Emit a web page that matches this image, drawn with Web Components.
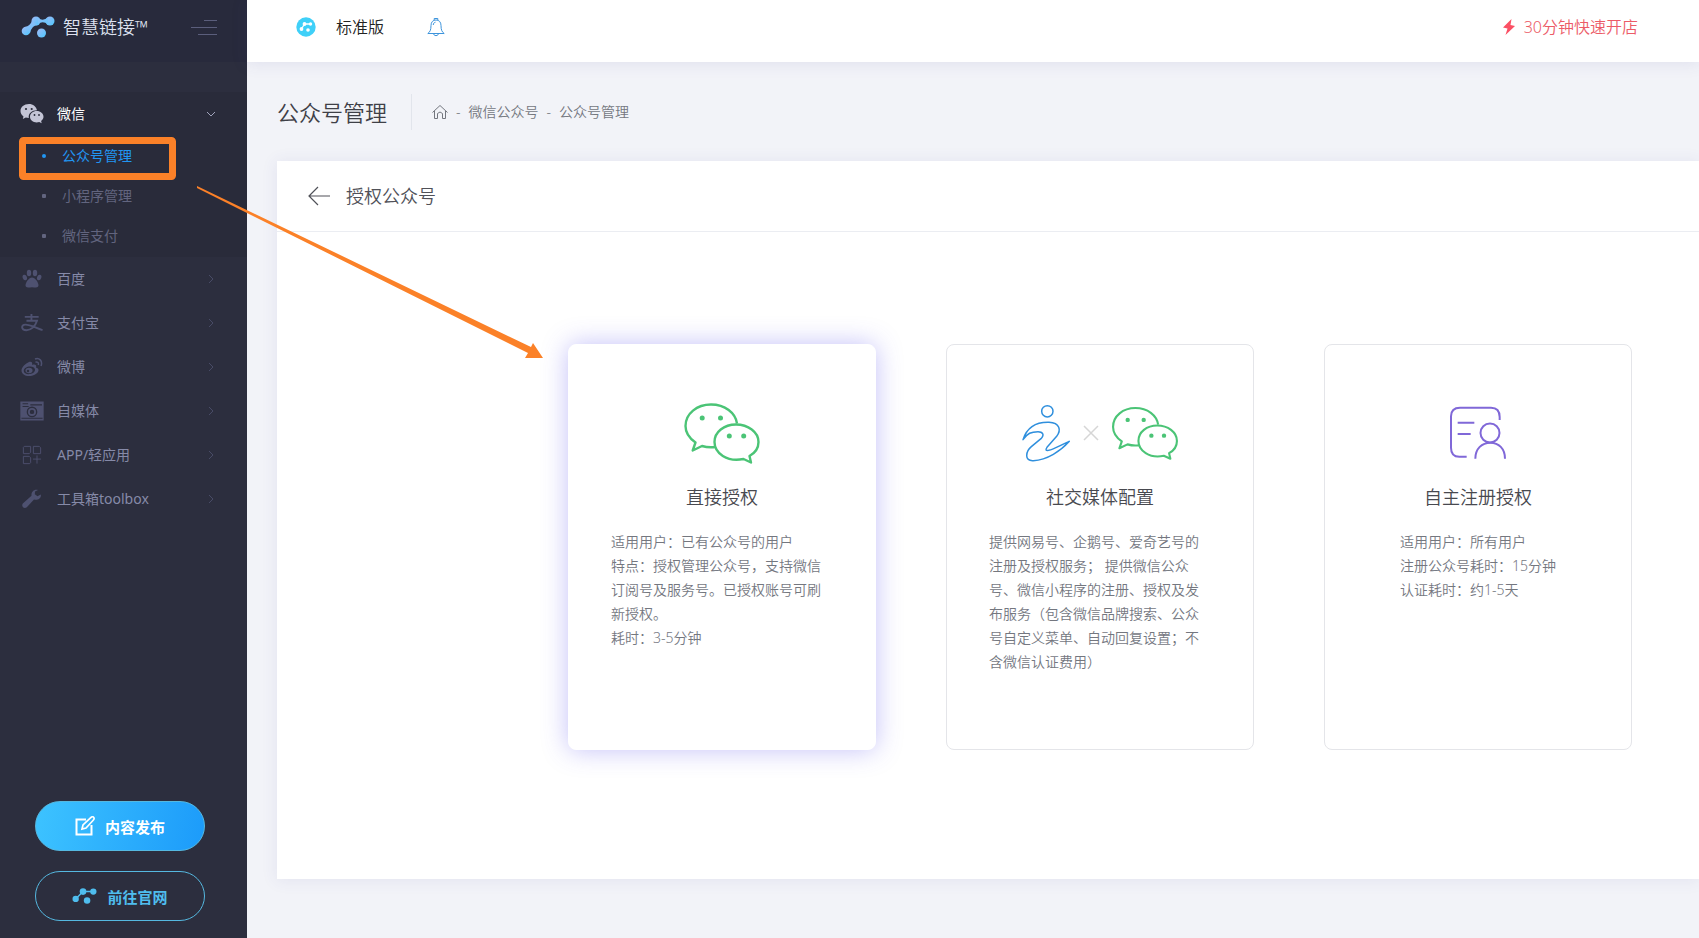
<!DOCTYPE html>
<html lang="zh-CN">
<head>
<meta charset="utf-8">
<meta name="viewport" content="width=device-width, initial-scale=1">
<title>公众号管理</title>
<style>
  body {
    margin: 0;
    background: #f2f3f8;
    font-family: "Noto Sans", "Noto Sans CJK SC", sans-serif;
    font-size: 14px;
    font-weight: 350;
    color: #575962;
  }
</style>
</head>
<body>
<app-shell>
  <side-nav slot="nav">
    <nav-group icon="wechat" label="微信" open>
      <nav-link current>公众号管理</nav-link>
      <nav-link>小程序管理</nav-link>
      <nav-link>微信支付</nav-link>
    </nav-group>
    <nav-group icon="paw" label="百度"></nav-group>
    <nav-group icon="alipay" label="支付宝"></nav-group>
    <nav-group icon="weibo" label="微博"></nav-group>
    <nav-group icon="camera" label="自媒体"></nav-group>
    <nav-group icon="apps" label="APP/轻应用"></nav-group>
    <nav-group icon="wrench" label="工具箱toolbox"></nav-group>
    <pill-button slot="actions" icon="edit" filled>内容发布</pill-button>
    <pill-button slot="actions" icon="nodes">前往官网</pill-button>
  </side-nav>
  <top-bar></top-bar>
  <page-head></page-head>
  <auth-panel>
    <auth-card active heading="直接授权">
      <ui-icon slot="art" name="wechat-line" style="width:80px;height:64px;color:#4bc476"></ui-icon>
      适用用户：已有公众号的用户<br>特点：授权管理公众号，支持微信订阅号及服务号。已授权账号可刷新授权。<br>耗时：3-5分钟
    </auth-card>
    <auth-card heading="社交媒体配置">
      <ui-icon slot="art" name="figure" style="width:52px;height:60px;color:#2f8fdd"></ui-icon>
      <ui-icon slot="art" name="times" style="width:16px;height:16px;color:#d6d6d6"></ui-icon>
      <ui-icon slot="art" name="wechat-line" style="width:70px;height:56px;color:#4bc476"></ui-icon>
      提供网易号、企鹅号、爱奇艺号的注册及授权服务； 提供微信公众号、微信小程序的注册、授权及发布服务（包含微信品牌搜索、公众号自定义菜单、自动回复设置；不含微信认证费用）
    </auth-card>
    <auth-card heading="自主注册授权">
      <ui-icon slot="art" name="register" style="width:60px;height:56px;color:#8068d8"></ui-icon>
      适用用户：所有用户<br>注册公众号耗时：15分钟<br>认证耗时：约1-5天
    </auth-card>
  </auth-panel>
  <guide-overlay slot="overlay"></guide-overlay>
</app-shell>

<script>
const ICONS = {
  nodes: ['0 0 34 22', '<path d="M5 15 15 5H29" fill="none" stroke="currentColor" stroke-width="2"/><g fill="currentColor"><circle cx="5" cy="15" r="4.300"/><circle cx="15" cy="5" r="4.500"/><circle cx="29" cy="5" r="4.300"/><circle cx="20.500" cy="17" r="4.400"/></g>'],
  brand: ['0 0 34 22', '<defs><linearGradient id="g" x2="1" y2="1"><stop stop-color="#a4b8f5"/><stop offset="1" stop-color="#4cc8ff"/></linearGradient></defs><g fill="url(#g)"><circle cx="5" cy="15" r="4.300"/><circle cx="15" cy="5" r="4.500"/><circle cx="29" cy="5" r="4.500"/><circle cx="20.500" cy="17" r="4.500"/><path d="M4 11Q9 10 11 5L17 9Q11 9 9 17Z M17 2Q22 5.500 27 1.500V8.500Q22 4.500 17 8Z"/></g>'],
  menu: ['0 0 26 16', '<path d="M13 1.500H26M0 8.500H26M7 15.500H26" stroke="currentColor" fill="none"/>'],
  wechat: ['0 0 24 20', '<path fill="currentColor" d="M9 0C4 0 .5 3 .5 7c0 2.300 1 4 3 5.500L2.800 15l3-1.500q1.500.4 3 .4C8 9.500 12 6.300 17 6.300 16.300 2.500 13 0 9 0Z"/><path fill="currentColor" d="M23.500 12.800c0-3.200-3-5.700-6.800-5.700S10 9.600 10 12.800s3 5.600 6.700 5.600q1.300 0 2.500-.4l2.500 1.300-.6-2.200c1.500-1.200 2.400-2.700 2.400-4.300Z"/><g fill="#292b3a"><circle cx="6" cy="5" r="1.100"/><circle cx="11.700" cy="5" r="1.100"/><circle cx="14.500" cy="11" r=".9"/><circle cx="19" cy="11" r=".9"/></g>'],
  paw: ['0 0 20 20', '<g fill="currentColor"><ellipse cx="2.800" cy="8.500" rx="2.100" ry="2.900" transform="rotate(-20 2.800 8.500)"/><ellipse cx="7" cy="4" rx="2.200" ry="3.300"/><ellipse cx="13" cy="4" rx="2.200" ry="3.300"/><ellipse cx="17.200" cy="8.500" rx="2.100" ry="2.900" transform="rotate(20 17.200 8.500)"/><path d="M10 8.500c3 0 6.500 5 6.500 7.800 0 1.800-1.300 2.200-2.500 2.200-1.500 0-2.500-.3-4-.3s-2.500.3-4 .3c-1.200 0-2.500-.4-2.500-2.200C3.500 13.500 7 8.500 10 8.500Z"/></g>'],
  alipay: ['0 0 20 18', '<path d="M9.500 1V7M3.500 3.500H16M5 7H14.500C13 12 9 15.500 5 15.500 0 15.500 0 10.500 4 10.500 9 10.500 13 13.500 19.500 15.500" fill="none" stroke="currentColor" stroke-width="1.700"/>'],
  weibo: ['0 0 22 20', '<path fill="currentColor" fill-rule="evenodd" d="M8 5C10 4 12 5 11 8c3-1 5 0 4 2.500 2.500.7 3 2.200 2.200 4C16 17 12 19 8 19 4 19 .5 17 .5 13.500.5 10 4.500 6.500 8 5ZM8 9.500C4.500 10 2.500 12 2.800 14.300 3 16.500 6 17.500 9 17c3-.5 5.300-2.300 5-4.500C13.700 10.200 11 9 8 9.500Z"/><ellipse cx="8" cy="13.500" rx="3.500" ry="2.800" fill="currentColor"/><circle cx="7" cy="14" r="1.200" fill="#2c2e3e"/><path d="M14 2C18 0 22 4 20 9M14.500 5.200C16.500 4.500 18 6 17.200 8" fill="none" stroke="currentColor" stroke-width="1.500"/>'],
  camera: ['0 0 21 18', '<path fill="currentColor" fill-rule="evenodd" d="M0 .5H21V17.500H0ZM2 2V3H7V2ZM8 4.500H2V5.500H7ZM10.500 5a4.800 4.800 0 1 0 0 9.600 4.800 4.800 0 0 0 0-9.600ZM9 3V4H19.500V3ZM1 15V16H20V15Z"/><circle cx="10.500" cy="9.800" r="2.800" fill="none" stroke="currentColor" stroke-width="1.600"/>'],
  apps: ['0 0 22 22', '<path d="M2.500 1.500H9.500V8L8 9.500H1.500V2.500ZM12.500 1.500H19L20.500 3V9.500H12.500ZM1.500 12.500H8L9.500 14V19.500L8.500 20.500H1.500ZM16.500 11.500V20.500M12 15.500H21" fill="none" stroke="currentColor"/>'],
  wrench: ['0 0 20 20', '<path fill="currentColor" d="M18.800 5.500 15.500 7.300 12.800 5.300 13 2.500 16 1C12.500-.2 9 2.500 9.500 6.800L.8 14.500C-.2 16 .2 17.500 1 18.300c1 1 2.700 1 3.800 0L12 10.500c4 1 7.500-1.500 6.800-5Z"/>'],
  right: ['0 0 12 12', '<path d="M4 2 8 6 4 10" fill="none" stroke="currentColor"/>'],
  down: ['0 0 12 12', '<path d="M2 4 6 8 10 4" fill="none" stroke="currentColor"/>'],
  edit: ['0 0 20 20', '<path d="M11 3.500H1.500V18.500H16.500V9" fill="none" stroke="currentColor" stroke-width="2"/><path d="M7 13 8 9 16 1.500Q18-.2 19 2q.5 1-1 2.500L11 12Z" fill="none" stroke="currentColor" stroke-width="1.700"/>'],
  badge: ['0 0 20 20', '<circle cx="10" cy="10" r="9.700" fill="#3fd0f8"/><path d="M5.500 12 8.500 7H14.500" stroke="#fff" stroke-width="1.300" fill="none"/><g fill="#fff"><circle cx="5.500" cy="12" r="1.900"/><circle cx="8.500" cy="7" r="1.900"/><circle cx="14.500" cy="7" r="1.700"/><circle cx="12" cy="13" r="1.800"/></g>'],
  bell: ['0 0 18 20', '<path d="M.8 16.500C3 15 4 13 4 8.500 4 5 6 3 9 3s5 2 5 5.500c0 4.500 1 6.500 3.200 8ZM6.500 16.800a2.600 2.600 0 0 0 5 0M7.200 3V1.500H10.800V3M6.300 8C6.300 6.500 7 5.500 8.500 5.200" fill="none" stroke="currentColor"/>'],
  bolt: ['0 0 12 16', '<path fill="currentColor" d="M8.500 0 0 8.500 4.500 9.500 2.500 16 12 7 7.500 6Z"/>'],
  home: ['0 0 16 16', '<path d="M.5 8.500 8 1.500 15.500 8.500M2.500 7V14.500H5.500V9.500Q8 6.500 10.500 9.500V14.500H13.500V7" fill="none" stroke="currentColor"/>'],
  back: ['0 0 22 20', '<path d="M22 10H1M10 1 1 10 10 19" fill="none" stroke="currentColor" stroke-width="1.200"/>'],
  times: ['0 0 16 16', '<path d="M1 1 15 15M15 1 1 15" stroke="currentColor" stroke-width="1.500"/>'],
  'wechat-line': ['0 0 80 64', '<g fill="none" stroke="currentColor" stroke-width="2.400" stroke-linejoin="round"><path d="M55 22.500C53.500 12 43 3.500 29 3.500 15 3.500 3.500 12.500 3.500 25c0 6.500 3.500 12 10 16.500L10.700 49.500 20 45C24 46.200 28 46.700 33.500 46"/><path d="M61.500 58C45 61.500 32.500 52 32.500 41 32.500 31 42 23.500 54 23.500 66 23.500 76.500 31 76.500 41c0 6-3.500 11-9 14L69 61.500Z"/></g><g fill="currentColor"><circle cx="20.200" cy="17" r="2.500"/><circle cx="38.500" cy="17" r="2.500"/><circle cx="47.300" cy="35" r="2.500"/><circle cx="61.700" cy="35" r="2.500"/></g>'],
  figure: ['28 38 156 180', '<g fill="none" stroke="currentColor" stroke-width="4.500" stroke-linejoin="round"><circle cx="110" cy="63" r="17"/><path d="M37 148C50 108 80 95 115 96 148 98 152 120 138 138L109 171C103 180 106 181 114 180 130 177 150 164 176 153 150 182 110 209 68 211 40 213 45 183 62 169L91 145C103 132 95 124 82 124 62 124 50 129 37 148Z"/></g>'],
  register: ['414 226 180 168', '<g fill="none" stroke="currentColor" stroke-width="6"><path d="M470 381H448Q423 381 423 354V260Q423 234 450 234H543Q569 234 569 262V271M443 279H493M443 313H482"/><circle cx="540" cy="310" r="28.500"/><path d="M496 387C496 357 516 339 541 339 566 339 585 357 585 387"/></g>']
};

function define(name, html, setup) {
  const template = document.createElement('template');
  template.innerHTML = html;
  customElements.define(name, class extends HTMLElement {
    connectedCallback() {
      if (this.shadowRoot) return;
      const root = this.attachShadow({ mode: 'open' });
      root.append(template.content.cloneNode(true));
      if (setup) setup(this, root);
    }
  });
}

function makeIcon(name, className) {
  const icon = document.createElement('ui-icon');
  icon.setAttribute('name', name);
  icon.className = className;
  return icon;
}

define('ui-icon', `<style>
  :host { display: inline-block; flex: none; width: 20px; height: 20px; }
  svg { display: block; width: 100%; height: 100%; }
</style>`, (el, root) => {
  const [box, body] = ICONS[el.getAttribute('name')];
  const holder = document.createElement('template');
  holder.innerHTML = `<svg viewBox="${box}" aria-hidden="true">${body}</svg>`;
  root.append(holder.content);
});

define('app-shell', `<style>
  :host { display: flex; position: relative; min-height: 100vh; overflow: hidden; }
  main { flex: 1; min-width: 0; display: flex; flex-direction: column; }
</style>
<slot name="nav"></slot><main><slot></slot></main><slot name="overlay"></slot>`);

define('side-nav', `<style>
  :host { display: flex; flex-direction: column; flex: none; width: 247px; background: #2c2e3e; }
  header { display: flex; align-items: center; height: 62px; box-sizing: border-box; padding: 0 30px 8px 21px; background: #282a3c; color: #dfe2f0; }
  .logo { width: 34px; height: 22px; }
  .name { flex: 1; margin-left: 8px; font-size: 18px; line-height: 24px; color: inherit; text-decoration: none; white-space: nowrap; }
  button { border: 0; padding: 0; background: none; color: #5b5e7c; display: flex; }
  .menu { width: 26px; height: 16px; }
  nav { padding-top: 30px; }
  .actions { margin-top: auto; display: flex; flex-direction: column; gap: 20px; padding: 20px 42px 17px 35px; }
</style>
<header><ui-icon class="logo" name="brand"></ui-icon><a class="name" href="#">智慧链接™</a>
<button aria-label="收起菜单"><ui-icon class="menu" name="menu"></ui-icon></button></header>
<nav><slot></slot></nav>
<div class="actions"><slot name="actions"></slot></div>`);

define('nav-group', `<style>
  :host { display: block; }
  :host([open]) { background: #292b3a; padding-bottom: 1px; }
  button { display: flex; align-items: center; width: 100%; height: 44px; padding: 0 30px 0 20px; border: 0; background: none; font: inherit; font-weight: 400; text-align: left; color: #868aa8; }
  .icon { width: 24px; height: 20px; color: #4e5170; }
  span { flex: 1; margin-left: 13px; line-height: 20px; }
  .arrow { width: 12px; height: 12px; color: #484b66; }
  :host([open]) button { color: #fff; }
  :host([open]) .icon { color: #c4c5d6; }
  :host([open]) .arrow { color: #a0a3bb; }
</style>
<button><span></span></button><slot></slot>`, (el, root) => {
  const open = el.hasAttribute('open');
  const button = root.querySelector('button');
  root.querySelector('span').textContent = el.getAttribute('label');
  button.setAttribute('aria-expanded', open);
  button.prepend(makeIcon(el.getAttribute('icon'), 'icon'));
  button.append(makeIcon(open ? 'down' : 'right', 'arrow'));
});

define('nav-link', `<style>
  :host { display: block; color: #62657f; }
  :host([current]) { color: #2196f3; }
  a { display: flex; align-items: center; height: 40px; padding-left: 42px; color: inherit; text-decoration: none; font-weight: 400; line-height: 20px; }
  a::before { content: ""; width: 4px; height: 4px; margin-right: 16px; background: currentColor; border-radius: 1px; }
  :host([current]) a::before { border-radius: 50%; }
</style><a href="#"><slot></slot></a>`);

define('pill-button', `<style>
  :host { display: block; }
  button { display: flex; align-items: center; justify-content: center; gap: 10px; width: 100%; height: 50px; padding: 0; border: 1px solid #55b8e0; border-radius: 25px; background: none; color: #4fbdee; font: inherit; font-size: 15px; font-weight: 700; }
  :host([filled]) button { color: #fff; background: linear-gradient(100deg, #3dc3ff, #1c9bfa); }
  ui-icon { width: 20px; height: 20px; }
  .nodes { width: 25px; }
</style><button><slot></slot></button>`, (el, root) => {
  const name = el.getAttribute('icon');
  root.querySelector('button').prepend(makeIcon(name, name));
});

define('top-bar', `<style>
  :host { display: flex; align-items: center; height: 62px; box-sizing: border-box; padding: 0 61px 8px 49px; background: #fff; box-shadow: 0 1px 15px 1px rgba(69,65,148,.1); font-size: 16px; line-height: 24px; color: #222; }
  .badge { width: 20px; height: 20px; margin-right: 20px; }
  .bell { width: 18px; height: 20px; }
  button { display: flex; border: 0; padding: 0; margin-left: 43px; background: none; color: #3d94dc; }
  a { display: flex; align-items: center; gap: 9px; margin-left: auto; color: #ec5b67; text-decoration: none; }
  .bolt { width: 12px; height: 16px; color: #fb5064; }
</style>
<ui-icon class="badge" name="badge"></ui-icon><span>标准版</span>
<button aria-label="通知"><ui-icon class="bell" name="bell"></ui-icon></button>
<a href="#"><ui-icon class="bolt" name="bolt"></ui-icon>30分钟快速开店</a>`);

define('page-head', `<style>
  :host { display: flex; align-items: center; padding: 32px 30px 31px; }
  h1 { margin: 0; padding-right: 24px; border-right: 1px solid #e2e5ec; font-size: 22px; font-weight: inherit; line-height: 36px; color: #3f4047; }
  nav { display: flex; align-items: center; gap: 8px; margin-left: 20px; line-height: 20px; color: #74777f; }
  a { display: flex; color: inherit; text-decoration: none; }
  ui-icon { width: 16px; height: 16px; }
</style>
<h1>公众号管理</h1>
<nav aria-label="位置"><a href="#" aria-label="首页"><ui-icon name="home"></ui-icon></a><span>-</span><a href="#">微信公众号</a><span>-</span><a href="#">公众号管理</a></nav>`);

define('auth-panel', `<style>
  :host { display: block; margin: 0 0 58px 30px; background: #fff; box-shadow: 0 1px 15px 1px rgba(69,65,148,.08); }
  header { display: flex; align-items: center; gap: 16px; height: 70px; padding-left: 31px; border-bottom: 1px solid #ebedf2; }
  button { display: flex; border: 0; padding: 0; background: none; color: #505158; }
  ui-icon { width: 22px; height: 20px; }
  h2 { margin: 0; font-size: 18px; font-weight: inherit; line-height: 26px; color: #505158; }
  .cards { display: flex; justify-content: flex-end; gap: 70px; padding: 112px 67px 129px 30px; }
</style>
<header><button aria-label="返回"><ui-icon name="back"></ui-icon></button><h2>授权公众号</h2></header>
<div class="cards"><slot></slot></div>`);

define('auth-card', `<style>
  :host { display: flex; flex-direction: column; align-items: center; flex: 0 1 308px; box-sizing: border-box; min-height: 406px; padding: 56px 20px 40px; border: 1px solid #e4e5e9; border-radius: 8px; background: #fff; }
  :host([active]) { border-color: #fff; box-shadow: 0 0 26px rgba(80,70,235,.34); }
  .art { display: flex; align-items: center; gap: 11px; height: 64px; }
  h3 { margin: 19px 0 20px; font-size: 18px; font-weight: inherit; line-height: 26px; color: #48494f; }
  .text { max-width: 222px; line-height: 24px; color: #74777f; }
</style>
<div class="art"><slot name="art"></slot></div><h3></h3><div class="text"><slot></slot></div>`, (el, root) => {
  root.querySelector('h3').textContent = el.getAttribute('heading');
});

define('guide-overlay', `<style>
  :host { position: absolute; top: 0; left: 0; width: 560px; height: 380px; pointer-events: none; }
  svg { display: block; }
</style>
<svg width="560" height="380" viewBox="0 0 560 380" aria-hidden="true">
  <rect x="22.500" y="140.500" width="150" height="36" rx="1" fill="none" stroke="#fb8128" stroke-width="7" stroke-linejoin="round"/>
  <path fill="#fb8128" d="M197 186 531 347 533 343 543 358 525 358 528 353 197 188Z"/>
</svg>`);
</script>
</body>
</html>
